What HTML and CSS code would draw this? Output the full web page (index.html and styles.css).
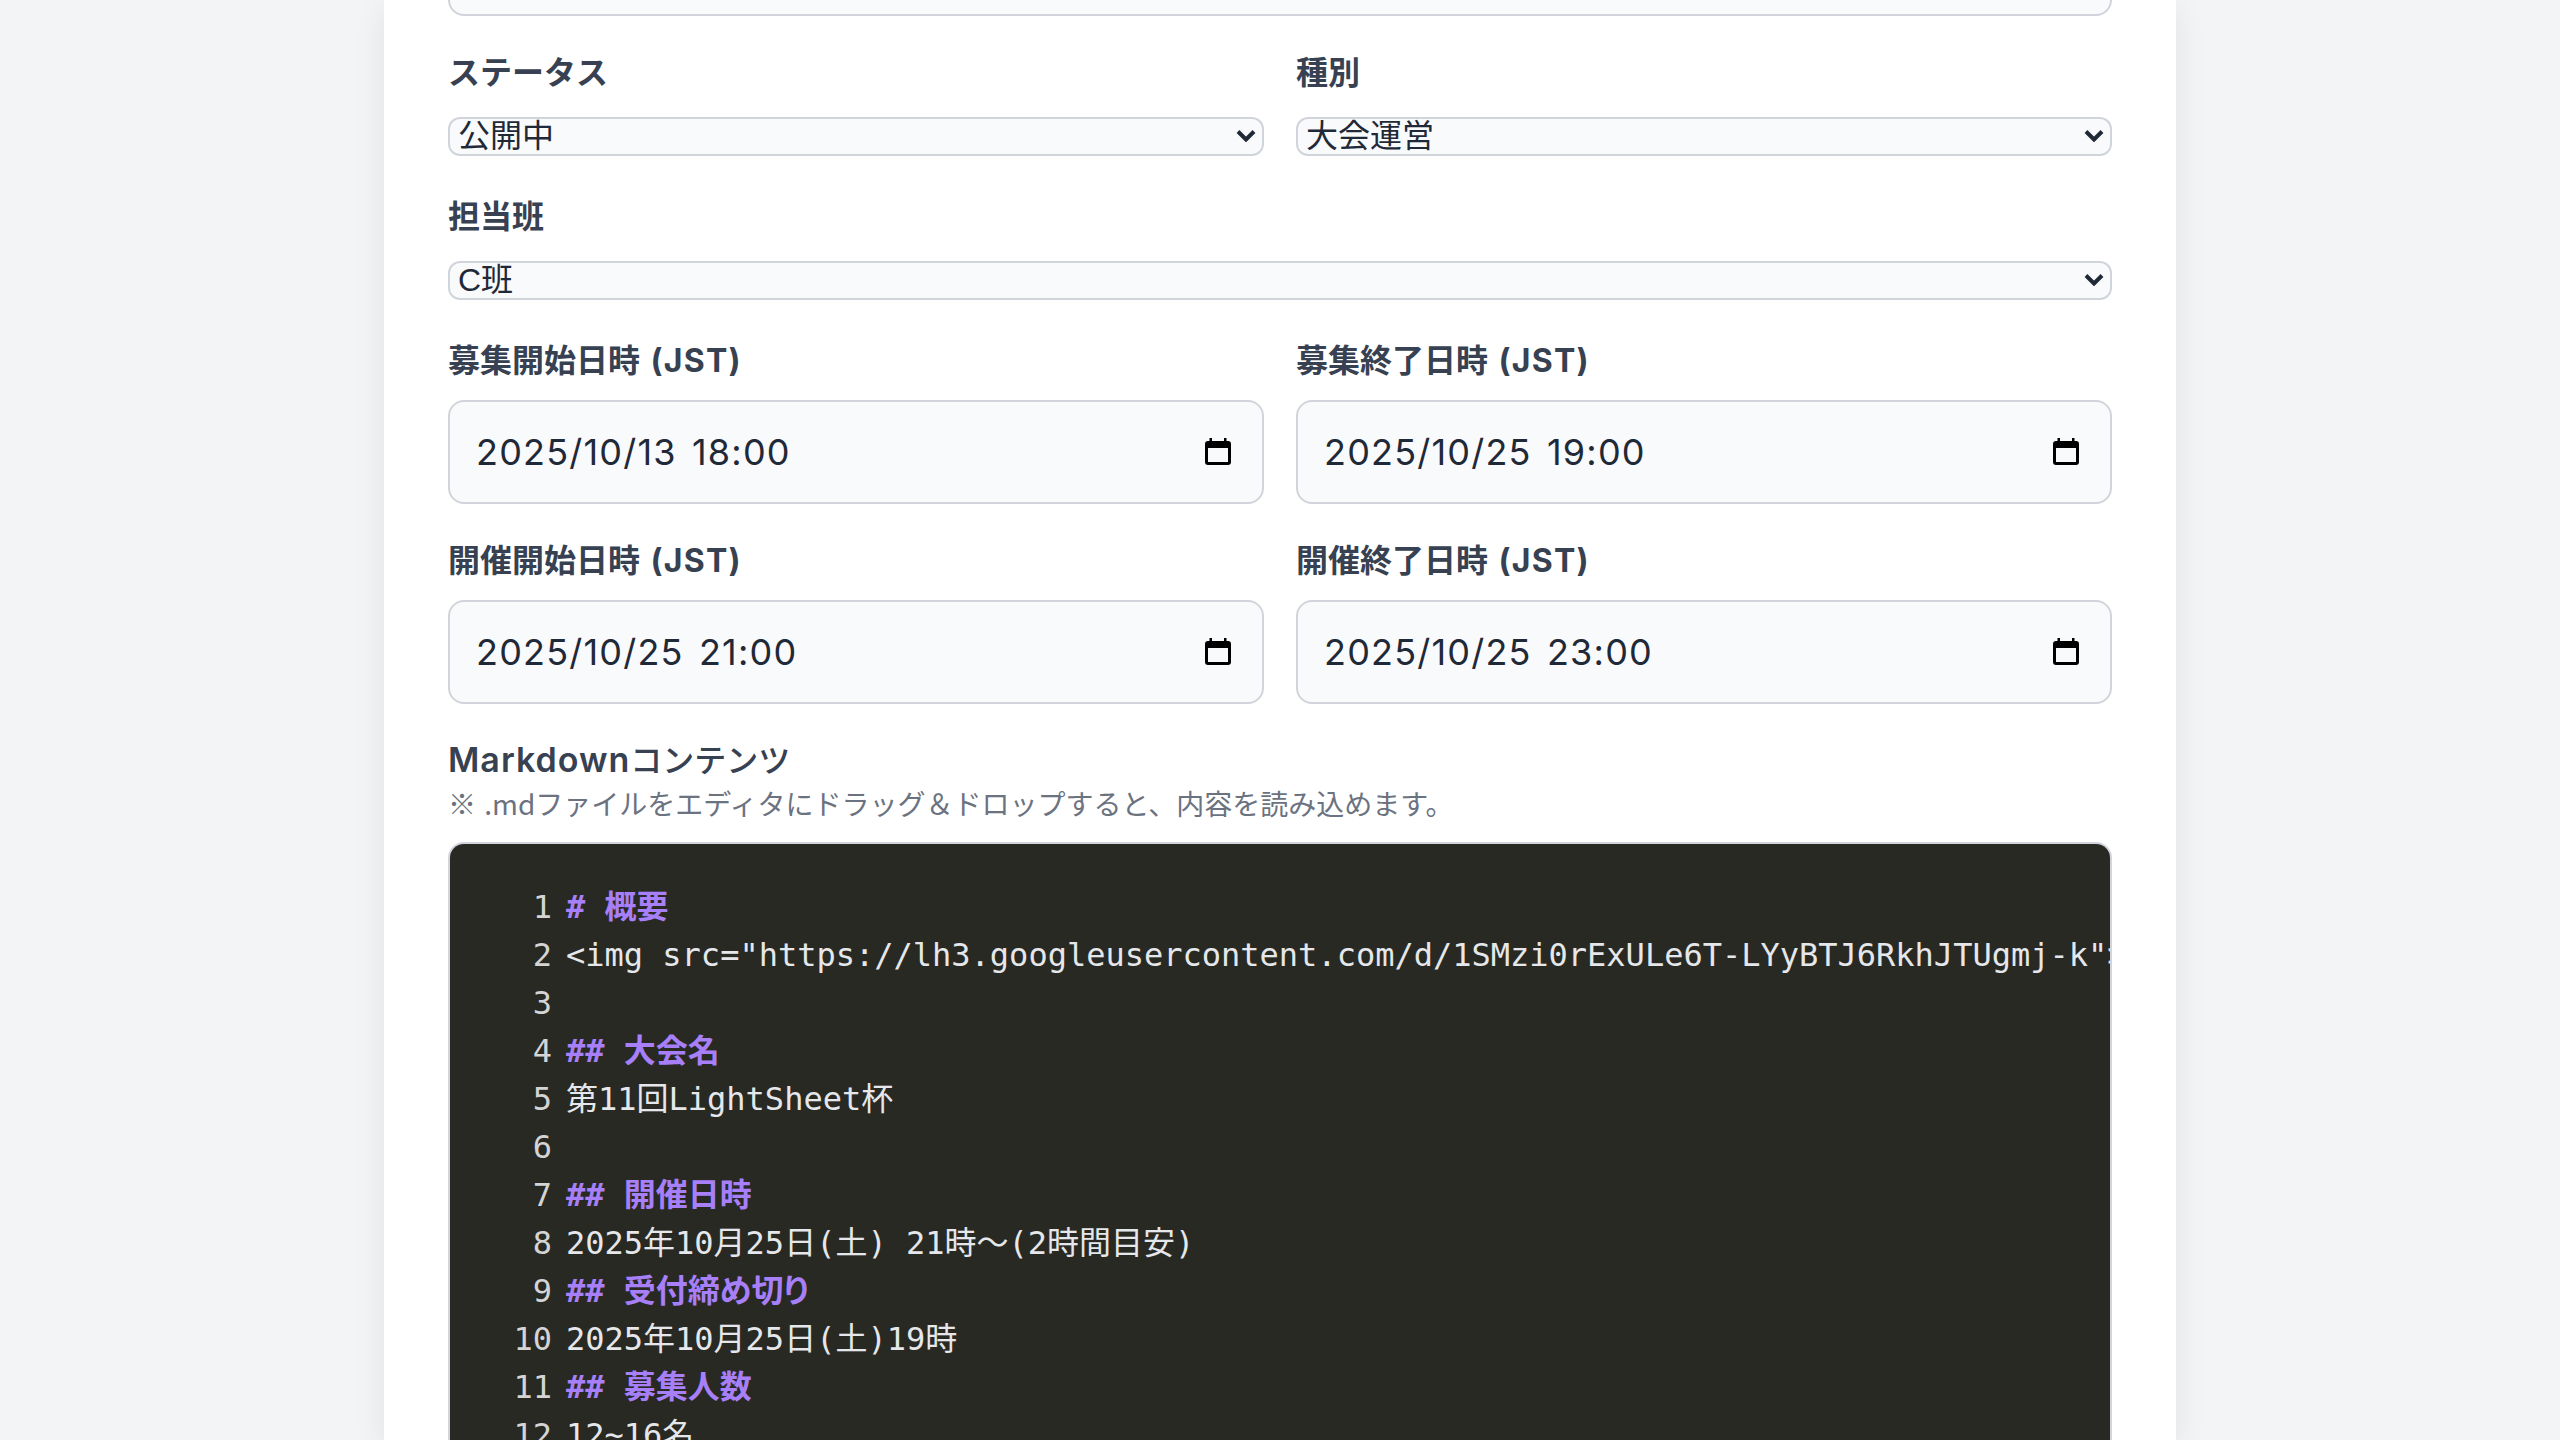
FILE: index.html
```html
<!DOCTYPE html>
<html lang="ja">
<head>
<meta charset="utf-8">
<title>イベント編集</title>
<link rel="stylesheet" href="styles.css">
</head>
<body>
<main class="card">
  <div class="field-stub"></div>
  <div class="row two">
    <div class="field"><label class="label">ステータス</label><div class="select-line"><div class="select"><span>公開中</span><svg class="chevron" viewBox="0 0 20 12"><path d="M2 1.5l8 8 8-8"/></svg></div></div></div>
    <div class="field"><label class="label">種別</label><div class="select-line"><div class="select"><span>大会運営</span><svg class="chevron" viewBox="0 0 20 12"><path d="M2 1.5l8 8 8-8"/></svg></div></div></div>
  </div>
  <div class="row">
    <div class="field"><label class="label">担当班</label><div class="select-line"><div class="select"><span>C班</span><svg class="chevron" viewBox="0 0 20 12"><path d="M2 1.5l8 8 8-8"/></svg></div></div></div>
  </div>
  <div class="row two">
    <div class="field"><label class="label">募集開始日時 <span class="latin">(JST)</span></label><div class="date"><span>2025/10/13 18:00</span><svg class="cal" viewBox="0 0 26 27"><path d="M4.5 0h2.5v3h12V0h2.5v3h1.5a3 3 0 0 1 3 3v18a3 3 0 0 1-3 3H3a3 3 0 0 1-3-3V6a3 3 0 0 1 3-3h1.5zM3 10v14h20V10z"/></svg></div></div>
    <div class="field"><label class="label">募集終了日時 <span class="latin">(JST)</span></label><div class="date"><span>2025/10/25 19:00</span><svg class="cal" viewBox="0 0 26 27"><path d="M4.5 0h2.5v3h12V0h2.5v3h1.5a3 3 0 0 1 3 3v18a3 3 0 0 1-3 3H3a3 3 0 0 1-3-3V6a3 3 0 0 1 3-3h1.5zM3 10v14h20V10z"/></svg></div></div>
  </div>
  <div class="row two">
    <div class="field"><label class="label">開催開始日時 <span class="latin">(JST)</span></label><div class="date"><span>2025/10/25 21:00</span><svg class="cal" viewBox="0 0 26 27"><path d="M4.5 0h2.5v3h12V0h2.5v3h1.5a3 3 0 0 1 3 3v18a3 3 0 0 1-3 3H3a3 3 0 0 1-3-3V6a3 3 0 0 1 3-3h1.5zM3 10v14h20V10z"/></svg></div></div>
    <div class="field"><label class="label">開催終了日時 <span class="latin">(JST)</span></label><div class="date"><span>2025/10/25 23:00</span><svg class="cal" viewBox="0 0 26 27"><path d="M4.5 0h2.5v3h12V0h2.5v3h1.5a3 3 0 0 1 3 3v18a3 3 0 0 1-3 3H3a3 3 0 0 1-3-3V6a3 3 0 0 1 3-3h1.5zM3 10v14h20V10z"/></svg></div></div>
  </div>
  <section class="md">
    <h2 class="md-title"><span class="md-latin">Markdown</span>コンテンツ</h2>
    <p class="md-note">※ .mdファイルをエディタにドラッグ＆ドロップすると、内容を読み込めます。</p>
    <div class="editor">
      <div class="line"><span class="num">1</span><span class="h"># 概要</span></div>
      <div class="line"><span class="num">2</span><span class="t">&lt;img src="https://lh3.googleusercontent.com/d/1SMzi0rExULe6T-LYyBTJ6RkhJTUgmj-k"&gt;</span></div>
      <div class="line"><span class="num">3</span><span class="t"></span></div>
      <div class="line"><span class="num">4</span><span class="h">## 大会名</span></div>
      <div class="line"><span class="num">5</span><span class="t">第11回LightSheet杯</span></div>
      <div class="line"><span class="num">6</span><span class="t"></span></div>
      <div class="line"><span class="num">7</span><span class="h">## 開催日時</span></div>
      <div class="line"><span class="num">8</span><span class="t">2025年10月25日(土) 21時〜(2時間目安)</span></div>
      <div class="line"><span class="num">9</span><span class="h">## 受付締め切り</span></div>
      <div class="line"><span class="num">10</span><span class="t">2025年10月25日(土)19時</span></div>
      <div class="line"><span class="num">11</span><span class="h">## 募集人数</span></div>
      <div class="line"><span class="num">12</span><span class="t">12~16名</span></div>
    </div>
  </section>
</main>
</body>
</html>
```
FILE: styles.css
```css
* { box-sizing: border-box; }
html, body { margin: 0; height: 1440px; overflow: hidden; }
body {
  background: #f3f4f6;
  font-family: "Inter", "Noto Sans CJK JP", sans-serif;
  color: #1f2937;
}
.card {
  width: 1792px;
  height: 1440px;
  margin: 0 auto;
  padding: 0 64px;
  background: #fff;
  box-shadow: 0 8px 30px rgba(0, 0, 0, 0.08);
  overflow: hidden;
}
.field-stub {
  height: 16px;
  margin-bottom: 32px;
  background: #f9fafb;
  border: 2px solid #d1d5db;
  border-top: 0;
  border-radius: 0 0 16px 16px;
}
.row { margin-bottom: 32px; }
.row.two { display: grid; grid-template-columns: 1fr 1fr; column-gap: 32px; }
.label {
  display: block;
  height: 48px;
  line-height: 50px;
  margin-bottom: 16px;
  font-size: 32px;
  font-weight: 700;
  color: #374151;
}
.latin { margin-left: 3px; letter-spacing: 1.2px; }
.select-line { height: 48px; display: flex; align-items: center; }
.select {
  width: 100%;
  height: 39px;
  padding: 0 6px 0 8px;
  display: flex;
  align-items: center;
  justify-content: space-between;
  background: #f9fafb;
  border: 2px solid #d1d5db;
  border-radius: 12px;
  font-family: "Liberation Sans", "Noto Sans CJK JP", sans-serif;
  font-size: 32px;
  line-height: 35px;
}
.select span { margin-top: 1px; }
.chevron { width: 20px; height: 12px; fill: none; stroke: #1f2937; stroke-width: 4; }
.date {
  height: 104px;
  padding: 0 31px 0 26px;
  display: flex;
  align-items: center;
  justify-content: space-between;
  background: #f9fafb;
  border: 2px solid #d1d5db;
  border-radius: 16px;
  font-size: 36px;
  letter-spacing: 1.2px;
  word-spacing: 4px;
}
.cal { width: 26px; height: 27px; fill: #000; margin-top: -2px; }
.md-title {
  margin: 0;
  height: 48px;
  line-height: 48px;
  font-size: 32px;
  font-weight: 500;
  color: #374151;
}
.md-latin { font-size: 34px; font-weight: 600; letter-spacing: 1px; }
.md-note {
  margin: 0 0 18px;
  height: 40px;
  line-height: 38px;
  font-family: "Noto Sans CJK JP", sans-serif;
  font-size: 28px;
  word-spacing: 2px;
  color: #6b7280;
}
.editor {
  height: 700px;
  padding: 39px 0 0;
  background: #282923;
  border: 2px solid #d1d5db;
  border-bottom: 0;
  border-radius: 16px 16px 0 0;
  overflow: hidden;
  font-family: "DejaVu Sans Mono", "Noto Sans CJK JP", monospace;
  font-size: 32px;
  line-height: 48px;
}
.line { display: flex; height: 48px; white-space: pre; }
.num { width: 102px; flex: none; text-align: right; color: #d4d4d4; }
.t, .h { margin-left: 14px; }
.t { color: #e5e7eb; }
.h { color: #a77ff8; font-weight: 700; font-feature-settings: "palt"; }
```
